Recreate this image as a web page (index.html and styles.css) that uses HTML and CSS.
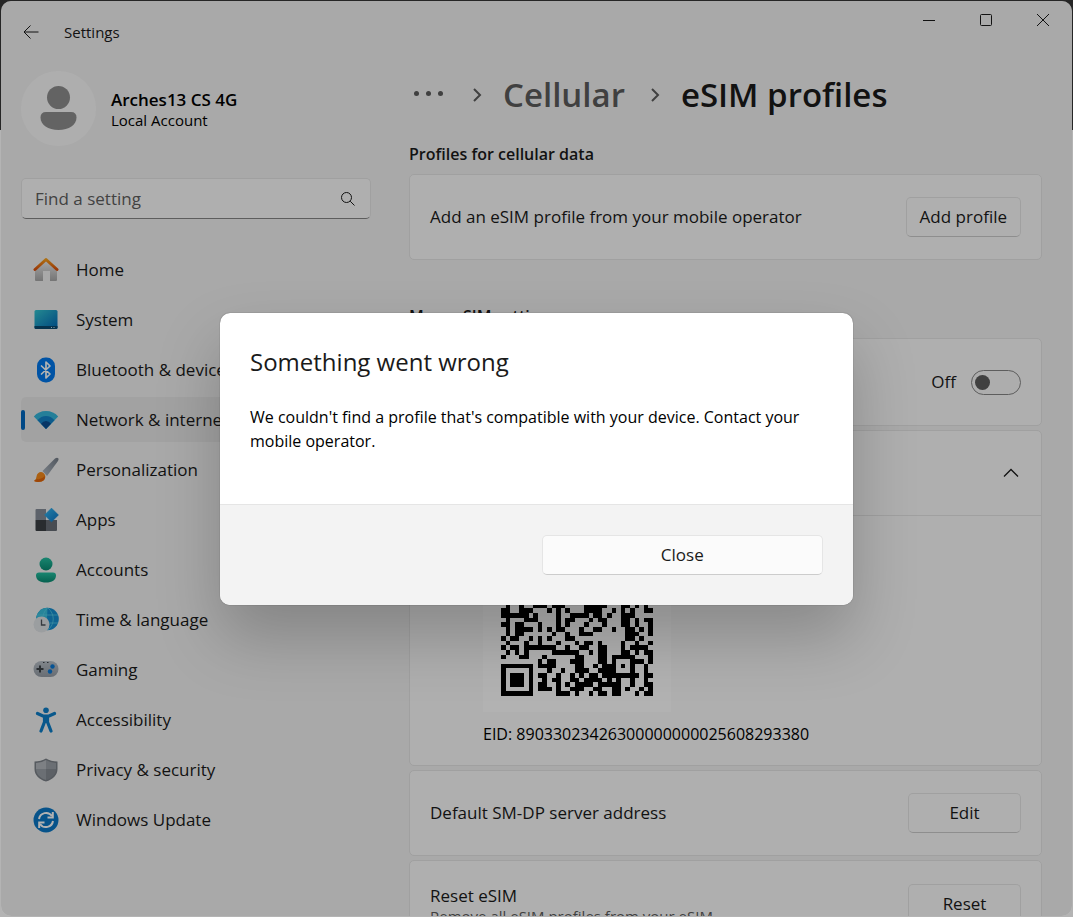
FILE: index.html
```html
<!DOCTYPE html>
<html lang="en">
<head>
  <meta charset="utf-8">
  <title>Settings</title>
  <link rel="stylesheet" href="styles.css">
</head>
<body>
  <div class="window">
    <header class="titlebar">
      <button class="back" aria-label="Back">
        <svg width="16" height="16" viewBox="0 0 16 16"><path d="M7.500 1.500L1 8L7.500 14.500M1 8H15.500"/></svg>
      </button>
      <span class="apptitle">Settings</span>
      <div class="winbuttons">
        <button aria-label="Minimize"><svg width="14" height="14" viewBox="0 0 14 14"><path d="M1 7.500H13"/></svg></button>
        <button aria-label="Maximize"><svg width="14" height="14" viewBox="0 0 14 14"><rect x="1.500" y="1.500" width="11" height="11" rx="1"/></svg></button>
        <button aria-label="Close window"><svg width="14" height="14" viewBox="0 0 14 14"><path d="M1 1L13 13M13 1L1 13"/></svg></button>
      </div>
    </header>

    <div class="layout">
      <aside class="sidebar">
        <div class="account">
          <svg class="avatar" width="75" height="75" viewBox="0 0 75 75">
            <circle cx="37.500" cy="37.500" r="37.500" fill="#fafafa"/>
            <circle cx="37.500" cy="26.500" r="11.500" fill="#8f8f8f"/>
            <path d="M25 41H50Q55.500 41 55.500 46.500C55.500 54 48 59 37.500 59S19.500 54 19.500 46.500Q19.500 41 25 41Z" fill="#8f8f8f"/>
          </svg>
          <div class="who">
            <div class="username">Arches13 CS 4G</div>
            <div class="usertype">Local Account</div>
          </div>
        </div>

        <label class="search">
          <input type="text" placeholder="Find a setting" aria-label="Find a setting">
          <svg width="16" height="16" viewBox="0 0 16 16"><circle cx="6.500" cy="6.500" r="5"/><path d="M10.200 10.200L14.500 14.500"/></svg>
        </label>

        <nav class="nav">
          <a href="#home">
            <svg width="26" height="26" viewBox="0 0 26 26">
              <defs><linearGradient id="roof" x1="0" y1="0" x2="0" y2="1"><stop offset="0" stop-color="#f9a01b"/><stop offset="1" stop-color="#dd4f0b"/></linearGradient>
              <linearGradient id="wall" x1="0" y1="0" x2="0" y2="1"><stop offset="0" stop-color="#f0f0f0"/><stop offset="1" stop-color="#a8a8a8"/></linearGradient></defs>
              <path d="M2 12L13 3L24 12V23Q24 24 23 24H17V14H10V24H3Q2 24 2 23Z" fill="url(#wall)"/>
              <path d="M2 12.500L13 2.500L24 12.500" fill="none" stroke="url(#roof)" stroke-width="3" stroke-linecap="round" stroke-linejoin="round"/>
            </svg>
            Home</a>
          <a href="#system">
            <svg width="26" height="26" viewBox="0 0 26 26">
              <defs><linearGradient id="screen" x1="0" y1="0" x2="1" y2="1"><stop offset="0" stop-color="#35c5d0"/><stop offset="1" stop-color="#0067b8"/></linearGradient></defs>
              <rect x="1.500" y="3" width="23" height="19" rx="1.500" fill="url(#screen)"/>
              <path d="M1.500 19H24.500V20.500Q24.500 22 23 22H3Q1.500 22 1.500 20.500Z" fill="#0a4a70"/>
              <path d="M18 20.500H19M20.500 20.500H21.500" stroke="#bfe3f0"/>
            </svg>
            System</a>
          <a href="#bluetooth">
            <svg width="26" height="26" viewBox="0 0 26 26">
              <rect x="4" y="0.500" width="18" height="25" rx="8.500" fill="#0078ec"/>
              <path d="M8.500 9L17 17L13 21V5L17 9L8.500 17" fill="none" stroke="#fff" stroke-width="1.700" stroke-linejoin="round" stroke-linecap="round"/>
            </svg>
            Bluetooth &amp; devices</a>
          <a href="#network" class="active">
            <svg width="26" height="26" viewBox="0 0 26 26">
              <path d="M13 22L0.800 9.500Q5.500 4 13 4T25.200 9.500Z" fill="#35b7dc"/>
              <path d="M13 22L4.500 13.300Q8 9 13 9T21.500 13.300Z" fill="#1483c9"/>
              <path d="M13 22L8 16.800Q10 14 13 14T18 16.800Z" fill="#0b4e93"/>
            </svg>
            Network &amp; internet</a>
          <a href="#personalization">
            <svg width="26" height="26" viewBox="0 0 26 26">
              <defs><linearGradient id="handle" x1="1" y1="0" x2="0" y2="1"><stop offset="0" stop-color="#747d88"/><stop offset="1" stop-color="#b2bac4"/></linearGradient></defs>
              <path d="M9.500 14L22 1.500Q24 0 25.300 1.200Q26 2.500 25 4L14 19Z" fill="url(#handle)"/>
              <path d="M1 24Q3.500 22.500 3.500 19.500C4 15.500 8 14 10.500 16C14 19 12 23.500 8.500 24.500Q4.500 25.700 1 24Z" fill="#f58a1b"/>
              <path d="M4 22Q8 23 12 19Q12 23.500 8.500 24.500Q4.500 25.700 1 24Z" fill="#e2650c"/>
            </svg>
            Personalization</a>
          <a href="#apps">
            <svg width="26" height="26" viewBox="0 0 26 26">
              <defs><linearGradient id="tile" x1="0" y1="0" x2="1" y2="1"><stop offset="0" stop-color="#36b8f0"/><stop offset="1" stop-color="#0a75c8"/></linearGradient></defs>
              <path d="M3.500 2H13V13H2.500V3Q2.500 2 3.500 2Z" fill="#868d98"/>
              <path d="M2.500 13H13V24H3.500Q2.500 24 2.500 23Z" fill="#3b4044"/>
              <path d="M13 13H24V23Q24 24 23 24H13Z" fill="#686e76"/>
              <path d="M18.500 1.200L25.300 8L18.500 14.800L11.700 8Z" fill="url(#tile)" stroke="url(#tile)" stroke-linejoin="round"/>
            </svg>
            Apps</a>
          <a href="#accounts">
            <svg width="26" height="26" viewBox="0 0 26 26">
              <defs><linearGradient id="person" x1="0" y1="0" x2="0" y2="1"><stop offset="0" stop-color="#25c0a2"/><stop offset="1" stop-color="#098b72"/></linearGradient></defs>
              <circle cx="13" cy="7" r="6.500" fill="url(#person)"/>
              <path d="M6 15.500H20Q23 15.500 23 18.500C23 23 19 25.500 13 25.500S3 23 3 18.500Q3 15.500 6 15.500Z" fill="url(#person)"/>
            </svg>
            Accounts</a>
          <a href="#time">
            <svg width="26" height="26" viewBox="0 0 26 26">
              <circle cx="14.500" cy="12" r="11.300" fill="#168fd0"/>
              <path d="M14.500 0.700A11.300 11.300 0 0 0 3.200 12H14Z" fill="#38bfdd"/>
              <path d="M4 8H25M5 16H25M14.500 1C8 7 8 17 14.500 23M15 1C22 7 22 17 15 23" fill="none" stroke="#5cd0e8" stroke-width="0.700"/>
              <circle cx="8.500" cy="17.500" r="8" fill="#dfe2e5"/>
              <path d="M8.500 12.500V18H12.500" fill="none" stroke="#4c535b" stroke-width="1.300"/>
            </svg>
            Time &amp; language</a>
          <a href="#gaming">
            <svg width="26" height="26" viewBox="0 0 26 26">
              <defs><linearGradient id="pad" x1="0" y1="0" x2="0" y2="1"><stop offset="0" stop-color="#b9c0c8"/><stop offset="1" stop-color="#959da6"/></linearGradient></defs>
              <rect x="0.500" y="4" width="25" height="16" rx="8" fill="url(#pad)"/>
              <path d="M7 8.500V15.500M3.500 12H10.500" stroke="#3d4248" stroke-width="2"/>
              <circle cx="19.500" cy="9.500" r="2.200" fill="#0a78d4"/><circle cx="17" cy="14.500" r="2.200" fill="#0a78d4"/>
              <path d="M10 5.500H11.500M14 5.500H15.500" stroke="#3d4248"/>
            </svg>
            Gaming</a>
          <a href="#accessibility">
            <svg width="26" height="26" viewBox="0 0 26 26">
              <circle cx="13" cy="3.200" r="2.800" fill="#0d7fc9"/>
              <path d="M4.500 6.500L10 9H16L21.500 6.500M11.500 9V15L8 24M14.500 9V15L18 24" fill="none" stroke="#0d7fc9" stroke-width="3.200" stroke-linecap="round" stroke-linejoin="round"/>
              <path d="M10 8H16V16H10Z" fill="#0d7fc9"/>
            </svg>
            Accessibility</a>
          <a href="#privacy">
            <svg width="26" height="26" viewBox="0 0 26 26">
              <path d="M13 1.500Q18 4.500 24.500 4.500V12C24.500 18 20 22.500 13 24.500C6 22.500 1.500 18 1.500 12V4.500Q8 4.500 13 1.500Z" fill="#7b8188"/>
              <path d="M13 3Q8.500 6 3 6V12H13Z" fill="#b4b8bd"/><path d="M13 3Q17.500 6 23 6V12H13Z" fill="#9aa0a6"/>
              <path d="M3 12H13V23C7 21 3 17 3 12Z" fill="#9aa0a6"/><path d="M23 12H13V23C19 21 23 17 23 12Z" fill="#868c93"/>
            </svg>
            Privacy &amp; security</a>
          <a href="#update">
            <svg width="26" height="26" viewBox="0 0 26 26">
              <circle cx="13" cy="13" r="12.500" fill="#0b78c6"/>
              <path d="M6 12A7.200 7.200 0 0 1 19 9M20 14A7.200 7.200 0 0 1 7 17" fill="none" stroke="#fff" stroke-width="2"/>
              <path d="M19.800 5V10.500H14.500M6.200 21V15.500H11.500" fill="none" stroke="#fff" stroke-width="2"/>
            </svg>
            Windows Update</a>
        </nav>
      </aside>

      <main class="content">
        <h1 class="crumbs">
          <a href="#more" class="dots" aria-label="More"><i></i><i></i><i></i></a>
          <svg width="10" height="16" viewBox="0 0 10 16"><path d="M2 2L8 8L2 14"/></svg>
          <a href="#cellular">Cellular</a>
          <svg width="10" height="16" viewBox="0 0 10 16"><path d="M2 2L8 8L2 14"/></svg>
          <span>eSIM profiles</span>
        </h1>

        <h2>Profiles for cellular data</h2>
        <div class="card">
          <span>Add an eSIM profile from your mobile operator</span>
          <button class="btn">Add profile</button>
        </div>

        <h2 class="second">More eSIM settings</h2>
        <div class="card tall">
          <label class="toggle">Off <input type="checkbox" role="switch"></label>
        </div>
        <div class="expander">
          <button class="expand" aria-label="Collapse">
            <svg width="16" height="10" viewBox="0 0 16 10"><path d="M1 8.500L8 1.500L15 8.500"/></svg>
          </button>
          <div class="eid">
            <div class="qrbox"><svg id="qr" viewBox="0 0 33 33" shape-rendering="crispEdges"></svg></div>
            <div>EID: 89033023426300000000025608293380</div>
          </div>
        </div>
        <div class="card">
          <span>Default SM-DP server address</span>
          <button class="btn">Edit</button>
        </div>
        <div class="card tall">
          <div>
            <div>Reset eSIM</div>
            <div class="desc">Remove all eSIM profiles from your eSIM</div>
          </div>
          <button class="btn">Reset</button>
        </div>
      </main>
    </div>

    <div class="smoke">
      <div class="dialog" role="dialog" aria-labelledby="dialogTitle">
        <div class="dialogbody">
          <h3 id="dialogTitle">Something went wrong</h3>
          <p>We couldn't find a profile that's compatible with your device. Contact your mobile operator.</p>
        </div>
        <div class="dialogfooter">
          <button class="btn" id="close">Close</button>
        </div>
      </div>
    </div>
  </div>
  <script src="script.js"></script>
</body>
</html>
```
FILE: styles.css
```css
* {
  box-sizing: border-box;
}
body {
  margin: 0;
  padding: 1px;
  height: 100vh;
  overflow: hidden;
  background: linear-gradient(#262626 130px, #b4b4b4 130px);
  font-family: "Open Sans", "Noto Sans", sans-serif;
  font-size: 17px;
  line-height: 24px;
  color: #1a1a1a;
}
button, input {
  font: inherit;
  color: inherit;
}
a {
  color: inherit;
  text-decoration: none;
}
.window {
  position: relative;
  height: 100%;
  overflow: hidden;
  border-radius: 10px;
  background: #f3f3f3;
}
.titlebar {
  display: flex;
  align-items: center;
  height: 62px;
}
.titlebar button {
  display: flex;
  align-items: center;
  justify-content: center;
  padding: 0;
  border: none;
  background: none;
}
.titlebar svg {
  fill: none;
  stroke: #1a1a1a;
}
.back {
  width: 60px;
  height: 40px;
}
.apptitle {
  padding-left: 3px;
  font-size: 15px;
}
.winbuttons {
  display: flex;
  align-self: flex-start;
  margin-left: auto;
  padding-right: 1px;
}
.winbuttons button {
  width: 57px;
  height: 38px;
}
.layout {
  display: grid;
  grid-template-columns: 350px 1fr;
  gap: 38px;
  padding: 0 30px 0 20px;
}

/* sidebar */
.account {
  display: flex;
  align-items: center;
  gap: 15px;
  padding-top: 8px;
  line-height: 21px;
}
.who {
  padding-top: 2px;
}
.username {
  font-weight: 600;
  color: #000;
}
.usertype {
  font-size: 15px;
  color: #000;
}
.search {
  display: flex;
  align-items: center;
  height: 41px;
  margin-top: 32px;
  padding: 0 14px 0 13px;
  border: 1px solid #e5e5e5;
  border-bottom-color: #868686;
  border-radius: 5px;
  background: #fbfbfb;
}
.search input {
  flex: 1;
  padding: 0;
  border: none;
  outline: none;
  background: none;
}
.search input::placeholder {
  color: #5f5f5f;
}
.search svg {
  fill: none;
  stroke: #1a1a1a;
}
.nav {
  display: flex;
  flex-direction: column;
  gap: 5px;
  margin-top: 28px;
}
.nav a {
  display: flex;
  align-items: center;
  gap: 17px;
  height: 45px;
  padding-left: 12px;
  border-radius: 5px;
}
.nav .active {
  position: relative;
  background: #e9e9e9;
}
.nav .active::before {
  content: "";
  position: absolute;
  left: 0;
  width: 4px;
  height: 20px;
  border-radius: 2px;
  background: #0067c0;
}

/* content */
.crumbs {
  display: flex;
  align-items: center;
  gap: 21px;
  height: 64px;
  margin: 0 0 15px;
  padding-left: 5px;
  font-size: 33px;
  font-weight: 600;
}
.crumbs a {
  color: #5c5c5c;
}
.crumbs svg {
  fill: none;
  stroke: #5c5c5c;
  stroke-width: 2;
}
.crumbs svg + a {
  margin-right: 4px;
}
.dots {
  display: flex;
  gap: 7px;
  margin-right: 8px;
  padding-bottom: 4px;
}
.dots i {
  width: 5px;
  height: 5px;
  border-radius: 50%;
  background: #5c5c5c;
}
h2 {
  margin: 0 0 8px;
  font-size: 16px;
  font-weight: 600;
}
.second {
  margin: 44px 0 10px;
}
.card {
  display: flex;
  align-items: center;
  justify-content: space-between;
  height: 86px;
  margin-bottom: 4px;
  padding: 0 20px;
  border: 1px solid #e5e5e5;
  border-radius: 5px;
  background: #fbfbfb;
}
.tall {
  height: 88px;
}
.desc {
  font-size: 15px;
  line-height: 16px;
  color: #5c5c5c;
}
.btn {
  min-width: 113px;
  height: 40px;
  padding: 0 13px;
  border: 1px solid #e5e5e5;
  border-bottom-color: #cccccc;
  border-radius: 5px;
  background: #fbfbfb;
}
.toggle {
  display: flex;
  align-items: center;
  gap: 15px;
  margin-left: auto;
}
.toggle input {
  appearance: none;
  display: flex;
  align-items: center;
  width: 50px;
  height: 25px;
  margin: 0;
  padding-left: 3px;
  border: 1px solid #868686;
  border-radius: 13px;
  background: #f8f8f8;
}
.toggle input::before {
  content: "";
  width: 15px;
  height: 15px;
  border-radius: 50%;
  background: #5c5c5c;
}
.toggle input:checked {
  justify-content: flex-end;
  padding: 0 3px;
  background: #0067c0;
}
.expander {
  margin-bottom: 4px;
  border: 1px solid #e5e5e5;
  border-radius: 5px;
  background: #fbfbfb;
}
.expand {
  display: flex;
  align-items: center;
  justify-content: flex-end;
  width: 100%;
  height: 85px;
  padding: 0 22px;
  border: none;
  border-bottom: 1px solid #e5e5e5;
  background: none;
}
.expand svg {
  fill: none;
  stroke: #1a1a1a;
  stroke-width: 1.3;
}
.eid {
  display: flex;
  flex-direction: column;
  gap: 10px;
  padding: 8px 20px 19px 73px;
  font-size: 16px;
  color: #000;
}
.qrbox {
  width: 188px;
  height: 188px;
  padding: 20px 18px 16px;
  background: #fff;
}
.qrbox svg {
  display: block;
}

/* dialog */
.smoke {
  position: absolute;
  inset: 0;
  display: flex;
  align-items: center;
  justify-content: center;
  background: rgba(0, 0, 0, 0.3);
}
.dialog {
  width: 633px;
  max-width: 90%;
  overflow: hidden;
  border-radius: 10px;
  background: #fff;
  box-shadow: 0 0 1px rgba(0, 0, 0, 0.6), 0 32px 64px rgba(0, 0, 0, 0.22);
}
.dialogbody {
  padding: 30px 30px 51px;
  font-size: 16px;
  color: #000;
}
.dialogbody h3 {
  margin: 0 0 24px;
  font-size: 24px;
  font-weight: 400;
  line-height: 38px;
  color: #1a1a1a;
}
.dialogbody p {
  margin: 0;
}
.dialogfooter {
  display: grid;
  grid-template-columns: 1fr 1fr;
  gap: 10px;
  padding: 30px;
  border-top: 1px solid #e5e5e5;
  background: #f3f3f3;
}
.dialogfooter .btn {
  grid-column: 2;
}
```
FILE: script.js
```javascript
//QR Code Modules, One String Per Row
var rows = [
  "XXXXXXX..X.XX..X.XX..X.X..XXXXXXX",
  "X.....X.XX..X.XX..X.XX.X..X.....X",
  "X.XXX.X..XX..X..XX.X..XX..X.XXX.X",
  "X.XXX.X.X..XX.XX..XX.X.X..X.XXX.X",
  "X.XXX.X.XX.X..X.XX..XX....X.XXX.X",
  "X.....X..XX.XX.X..XX..XX..X.....X",
  "XXXXXXX.X.X.X.X.X.X.X.X.X.XXXXXXX",
  "........XX..X.XX..X.XX.X.........",
  "X.XX.XXX..XX.X..XX..X.XX.XX.X.XX.",
  ".XX.X..X.XX..XX.X.XX..X.X..XX.X.X",
  "X..XX.X.X..XX..XX.X.XX..XX.X..XX.",
  ".XX..XX.XX.X.XX..XX..XX..XX.XX..X",
  "X.XX..X..XXX.X.XX.XXXX..X.X..X.XX",
  ".X..X..XXX.XXX....XXXXX...XX.X.X.",
  "XX..XXX...X.X.X...XXXX..X.X.X..XX",
  "XXXXXX.X....X..XXXX.XX.X..XXX....",
  ".X...XXX....X.XX...X.XX...XX.X.XX",
  "XX.XX...X...X.X...X...X...XX.X..X",
  ".X.XXXX.X.X.XX...X..XX..X..XX.X.X",
  ".X.XX......X..X..XXX.......XXX..X",
  "X.XX..X.X.X...XX...........XX.X..",
  ".X...X..X...X...X.XX.X....X..X..X",
  "X.XX.XXXXXXX..X..XX..XX...X.XXXX.",
  ".X.X.X.....XXXXXX..X.XX...XX.X.XX",
  "X...XX...X......XX...XX.XXXXX...X",
  "........X.XX...XXX...XX.X...XXX.X",
  "XXXXXXX.XXXX....XX..X.XXX.X.X..X.",
  "X.....X...X..X..XXX..XXXX...X..X.",
  "X.XXX.X.XX..X..X.X.XX.XXXXXXXX.XX",
  "X.XXX.X..X.XX..XX.XXXX.X.X..X..X.",
  "X.XXX.X.XX..X.X.XXXX.XXXXX..X..XX",
  "X.....X.XXX.X..XXX..XX..XX.X..X.X",
  "XXXXXXX.....XXX.X..X.XX.XX...X.XX"
];

var qr = document.getElementById("qr");
for (var y = 0; y < rows.length; y++) {
  for (var x = 0; x < rows[y].length; x++) {
    if (rows[y][x] == "X") {
      var cell = document.createElementNS("http://www.w3.org/2000/svg", "rect");
      cell.setAttribute("x", x);
      cell.setAttribute("y", y);
      cell.setAttribute("width", 1);
      cell.setAttribute("height", 1);
      qr.appendChild(cell);
    }
  }
}

//Close Button
document.getElementById("close").addEventListener("click", function() {
  document.querySelector(".smoke").style.display = "none";
});
```
